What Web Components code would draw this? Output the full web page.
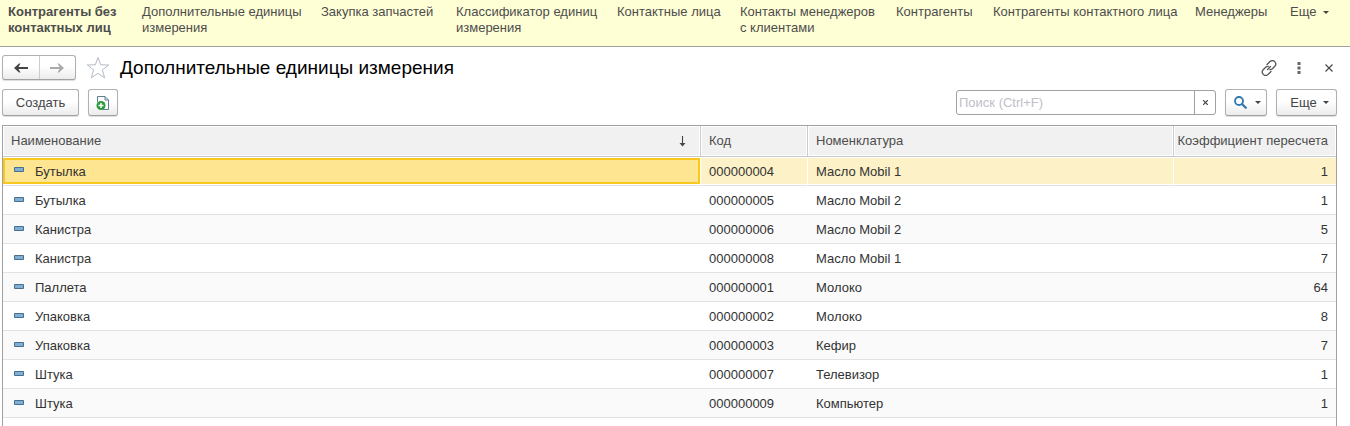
<!DOCTYPE html>
<html lang="ru">
<head>
<meta charset="utf-8">
<title>Дополнительные единицы измерения</title>
<style>
  html, body { height: 100%; }
  body {
    margin: 0;
    background: #fff;
    color: #444;
    font: 13px/16px "Liberation Sans", Arial, sans-serif;
    overflow: hidden;
  }
</style>
</head>
<body>
<list-page></list-page>

<template id="t-page">
  <style>
    :host { display: flex; flex-direction: column; height: 100vh; }
    main { flex: 1; min-height: 0; display: flex; flex-direction: column; padding: 8px 13px 0 2px; }
    form-header { margin-bottom: 9px; }
    command-bar { margin-bottom: 9px; }
    unit-table { flex: 1; min-height: 0; }
  </style>
  <section-bar>
    <section-link current>Контрагенты без<br>контактных лиц</section-link>
    <section-link>Дополнительные единицы<br>измерения</section-link>
    <section-link>Закупка запчастей</section-link>
    <section-link>Классификатор единиц<br>измерения</section-link>
    <section-link>Контактные лица</section-link>
    <section-link>Контакты менеджеров<br>с клиентами</section-link>
    <section-link>Контрагенты</section-link>
    <section-link>Контрагенты контактного лица</section-link>
    <section-link>Менеджеры</section-link>
    <section-link more>Еще</section-link>
  </section-bar>
  <main>
    <form-header>Дополнительные единицы измерения</form-header>
    <command-bar></command-bar>
    <unit-table></unit-table>
  </main>
</template>

<template id="t-section-bar">
  <style>
    :host { display: block; background: #ffffd5; border-bottom: 1px solid #a0a0a0; }
    nav {
      display: grid; grid-template-columns: 134px 179px 135px 161px 123px 156px 97px 202px 95px auto;
      justify-content: start; padding: 4px 8px 10px; min-height: 32px;
    }
  </style>
  <nav aria-label="Разделы"><slot></slot></nav>
</template>

<template id="t-section-link">
  <style>
    :host { display: block; }
    :host([current]) { font-weight: bold; }
    a { display: block; color: #4d4d4d; text-decoration: none; white-space: nowrap; }
    svg { display: none; }
    :host([more]) svg { display: inline-block; margin-left: 7px; vertical-align: 2px; }
  </style>
  <a href="#"><slot></slot><svg width="6" height="3" viewBox="0 0 6 3" aria-hidden="true"><path d="M0 0h6L3 3z" fill="#444"/></svg></a>
</template>

<template id="t-push">
  <style>
    :host { display: block; flex: none; }
    button {
      box-sizing: border-box; width: 100%; height: 27px; margin: 0; padding: 0 13px;
      display: flex; align-items: center; justify-content: center; gap: 6px;
      font: inherit; color: #444; white-space: nowrap;
      background: linear-gradient(#fff 0%, #fff 45%, #ececec 100%);
      border: 1px solid #b0b0b0; border-bottom-color: #a0a0a0; border-radius: 3px;
      box-shadow: 0 1px 1px #ddd;
    }
    :host([icon]) button { padding: 0 6px; }
    :host([split]) button { padding: 0 6px 0 8px; gap: 8px; }
    :host([menu]) button { padding: 0 6px 0 12px; }
  </style>
  <button type="button"><slot></slot></button>
</template>

<template id="t-form-header">
  <style>
    :host { display: flex; align-items: center; height: 25px; }
    .history {
      display: flex; box-sizing: border-box; width: 74px; height: 25px;
      border: 1px solid #b0b0b0; border-bottom-color: #a0a0a0; border-radius: 3px;
      background: linear-gradient(#fff 0%, #fff 45%, #ececec 100%);
      box-shadow: 0 1px 1px #ddd;
    }
    button { margin: 0; padding: 0; border: 0; background: none; display: flex; align-items: center; justify-content: center; }
    .history button { flex: 1; }
    .history button + button { border-left: 1px solid #ccc; }
    .star { width: 24px; height: 24px; margin: 0 10px 0 10px; }
    h1 { margin: 0; flex: 1; font-size: 19px; line-height: 24px; font-weight: normal; color: #000; white-space: nowrap; }
    .tools { display: flex; gap: 14px; }
    .tools button { width: 16px; height: 24px; }
  </style>
  <div class="history">
    <button type="button" aria-label="Назад"><svg width="14" height="10" viewBox="0 0 14 10"><path d="M14 4v2H4.500L6.500 9.500H5L0 5L5 .5h1.500L4.500 4z" fill="#444"/></svg></button>
    <button type="button" aria-label="Вперед"><svg width="14" height="10" viewBox="0 0 14 10"><path d="M0 4v2h9.500L7.500 9.500H9L14 5L9 .5H7.500L9.500 4z" fill="#aaa"/></svg></button>
  </div>
  <button type="button" class="star" aria-label="В избранное"><svg width="24" height="24" viewBox="0 0 24 24"><path d="M12 1.500l2.700 7.300 8 .2-6.300 4.900 2.200 7.900-6.600-4.500-6.600 4.500 2.200-7.900L1.300 9l8-.2z" fill="#fff" stroke="#b3bac3"/></svg></button>
  <h1><slot></slot></h1>
  <div class="tools">
    <button type="button" aria-label="Ссылка"><svg width="16" height="16" viewBox="0 0 16 16"><g fill="none" stroke="#555" stroke-width="1.300" stroke-linecap="round"><path d="M6 4.500l3-3c1.400-1.200 3.400-1.200 4.700.1 1.300 1.300 1.300 3.300.1 4.700L11.400 8.700c-.8.700-1.700 1-2.600.9"/><path d="M10 11.500l-3 3c-1.400 1.200-3.400 1.200-4.700-.1C1 13.100 1 11.100 2.200 9.700L4.600 7.300c.8-.7 1.700-1 2.600-.9"/><path d="M6.500 9.500l3-3"/></g></svg></button>
    <button type="button" aria-label="Действия"><svg width="4" height="12" viewBox="0 0 4 12"><path d="M.5 0h3v3h-3zM.5 4.500h3v3h-3zM.5 9h3v3h-3z" fill="#666"/></svg></button>
    <button type="button" aria-label="Закрыть"><svg width="8" height="8" viewBox="0 0 8 8"><path d="M.5.5l7 7M7.500.5l-7 7" stroke="#444" stroke-width="1.100"/></svg></button>
  </div>
</template>

<template id="t-command-bar">
  <style>
    :host { display: flex; align-items: center; gap: 9px; }
    .grow { flex: 1; }
    .search {
      display: flex; box-sizing: border-box; width: 260px; height: 25px;
      border: 1px solid #a0a0a0; border-radius: 3px; overflow: hidden; background: #fff;
    }
    input { flex: 1; min-width: 0; margin: 0; padding: 0 2px; border: 0; outline: 0; font: inherit; color: #333; background: none; }
    input::placeholder { color: #c0c0c8; opacity: 1; }
    .search button { width: 21px; padding: 0; margin: 0; border: 0; border-left: 1px solid #a0a0a0; background: none; display: flex; align-items: center; justify-content: center; }
    .create { width: 77px; } .copy { width: 30px; } .find { width: 42px; } .more { width: 61px; }
    svg { flex: none; }
  </style>
  <push-button class="create">Создать</push-button>
  <push-button class="copy" icon><svg width="14" height="16" viewBox="0 0 14 16" role="img" aria-label="Создать копированием"><path d="M1.500 7V1.500h7.500l3.500 3.500v9.500H7" fill="#fff" stroke="#5f7d95"/><path d="M9 1.500V5h3.500" fill="none" stroke="#5f7d95"/><circle cx="5" cy="10.500" r="4.500" fill="#2c9a3a"/><path d="M5 8v5M2.500 10.500h5" stroke="#fff" stroke-width="1.500"/></svg></push-button>
  <span class="grow"></span>
  <div class="search">
    <input type="text" aria-label="Поиск" placeholder="Поиск (Ctrl+F)">
    <button type="button" aria-label="Очистить"><svg width="5" height="5" viewBox="0 0 5 5"><path d="M0 0l5 5M5 0L0 5" stroke="#444" stroke-width="1.200"/></svg></button>
  </div>
  <push-button class="find" split><svg width="13" height="13" viewBox="0 0 13 13" role="img" aria-label="Найти"><circle cx="5" cy="5" r="4" fill="none" stroke="#2f78ad" stroke-width="1.800"/><path d="M8.200 8.200l3.600 3.600" stroke="#2f78ad" stroke-width="2.200" stroke-linecap="round"/></svg><svg width="6" height="3" viewBox="0 0 6 3" aria-hidden="true"><path d="M0 0h6L3 3z" fill="#444"/></svg></push-button>
  <push-button class="more" menu>Еще<svg width="6" height="3" viewBox="0 0 6 3" aria-hidden="true"><path d="M0 0h6L3 3z" fill="#444"/></svg></push-button>
</template>

<template id="t-unit-table">
  <style>
    :host { display: block; border: 1px solid #a0a0a0; border-bottom: 0; overflow: hidden; }
    table { width: 100%; table-layout: fixed; border-collapse: separate; border-spacing: 0; }
    .code { width: 107px; } .item { width: 366px; } .ratio { width: 162px; }
    th, td { box-sizing: border-box; padding: 0 8px; text-align: left; font-weight: normal; white-space: nowrap; }
    th {
      height: 31px; color: #4d4d4d; background: #f1f1f1;
      border-right: 1px solid #ccc; border-bottom: 1px solid #c8c8c8;
      box-shadow: inset 0 0 0 1px #fff;
    }
    th:last-child { border-right: 0; padding-left: 2px; }
    th:last-child, td:last-child { text-align: right; }
    .sort { display: flex; justify-content: space-between; align-items: center; padding-right: 6px; }
    td { height: 29px; padding-top: 2px; color: #333; border-bottom: 1px solid #e2e2e2; }
    tr:nth-child(odd) td { background: #fafafa; }
    tbody tr.current td { background: #fdf1c7; border-right: 1px solid #fff; box-shadow: inset 0 1px #fff, inset 0 -1px #fff; }
    tbody tr.current td:last-child { border-right: 0; }
    td:first-child { padding-left: 0; }
    tbody tr.current td:first-child { padding: 1px 0; background: #fff; box-shadow: none; }
    .name { display: flex; align-items: center; gap: 11px; padding-left: 11px; }
    .name svg { margin-bottom: 4px; }
    .current .name { box-sizing: border-box; height: 26px; padding: 1px 0 0 9px; background: #fee591; border: 2px solid #f8c81f; }
  </style>
  <table>
    <colgroup><col><col class="code"><col class="item"><col class="ratio"></colgroup>
    <thead><tr>
      <th scope="col" aria-sort="ascending"><div class="sort">Наименование<svg width="7" height="11" viewBox="0 0 7 11" aria-hidden="true"><path d="M3.500 0v9" stroke="#444" stroke-width="1.100"/><path d="M.5 7h6L3.500 10.500z" fill="#444"/></svg></div></th>
      <th scope="col">Код</th>
      <th scope="col">Номенклатура</th>
      <th scope="col">Коэффициент пересчета</th>
    </tr></thead>
    <tbody></tbody>
  </table>
</template>

<script>
  function define(name, templateId, setup) {
    customElements.define(name, class extends HTMLElement {
      constructor() {
        super();
        const root = this.attachShadow({ mode: "open" });
        root.append(document.getElementById(templateId).content.cloneNode(true));
        if (setup) setup(root);
      }
    });
  }

  const rows = [
    ["Бутылка", "000000004", "Масло Mobil 1", 1],
    ["Бутылка", "000000005", "Масло Mobil 2", 1],
    ["Канистра", "000000006", "Масло Mobil 2", 5],
    ["Канистра", "000000008", "Масло Mobil 1", 7],
    ["Паллета", "000000001", "Молоко", 64],
    ["Упаковка", "000000002", "Молоко", 8],
    ["Упаковка", "000000003", "Кефир", 7],
    ["Штука", "000000007", "Телевизор", 1],
    ["Штука", "000000009", "Компьютер", 1]
  ];
  const marker = '<svg width="10" height="5" viewBox="0 0 10 5" aria-hidden="true"><path d="M.5.5h9v4h-9z" fill="#7fb0d4" stroke="#466f8f"/></svg>';

  define("section-link", "t-section-link");
  define("section-bar", "t-section-bar");
  define("push-button", "t-push");
  define("form-header", "t-form-header");
  define("command-bar", "t-command-bar");
  define("unit-table", "t-unit-table", root => {
    root.querySelector("tbody").innerHTML = rows.map(([name, code, item, ratio], i) =>
      `<tr${i === 0 ? ' class="current"' : ""}><td><div class="name">${marker}${name}</div></td><td>${code}</td><td>${item}</td><td>${ratio}</td></tr>`
    ).join("");
  });
  define("list-page", "t-page");
</script>
</body>
</html>
